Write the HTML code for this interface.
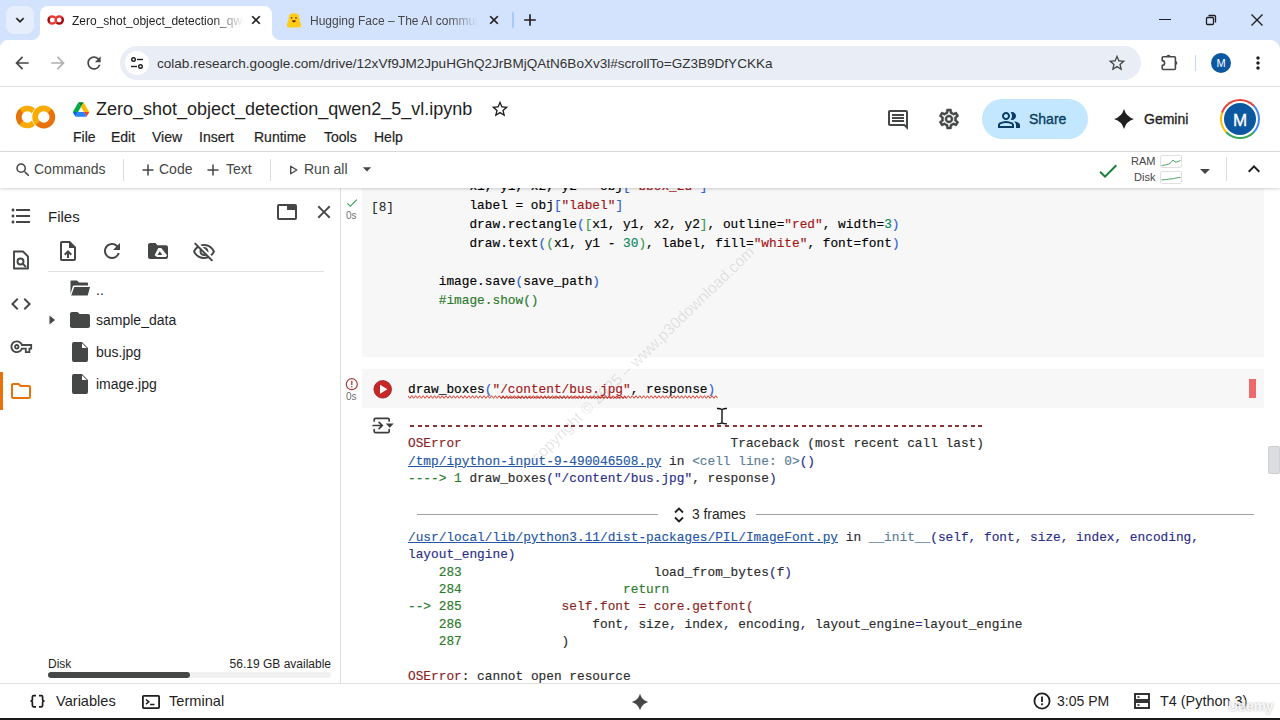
<!DOCTYPE html>
<html><head><meta charset="utf-8">
<style>
*{box-sizing:border-box;margin:0;padding:0}
html,body{width:1280px;height:720px;overflow:hidden;background:#fff;font-family:"Liberation Sans",sans-serif;color:#1f1f1f}
.a{position:absolute}
#tabstrip{left:0;top:0;width:1280px;height:40px;background:#d3e3fd}
#nav{left:0;top:40px;width:1280px;height:46px;background:#fff}
#navline{left:0;top:86px;width:1280px;height:1px;background:#e3e3e3}
#omni{left:120px;top:46px;width:1021px;height:34px;border-radius:17px;background:#e9eef6}
#header{left:0;top:87px;width:1280px;height:64px;background:#fff}
#hline{left:0;top:151px;width:1280px;height:1px;background:#e0e0e0}
#toolbar{left:0;top:152px;width:1280px;height:36px;background:#fff;box-shadow:0 1px 3px rgba(0,0,0,.18)}
#rail{left:0;top:188px;width:42px;height:495px;background:#fff}
#files{left:42px;top:188px;width:299px;height:495px;background:#fff;border-right:1px solid #e0e0e0}
#main{left:342px;top:188px;width:938px;height:495px;background:#fff}
#status{left:0;top:683px;width:1280px;height:35px;background:#fff;border-top:1px solid #e0e0e0}
#bottomline{left:0;top:718px;width:1280px;height:2px;background:#1a1a1a}
.tabt{font-size:12px;line-height:16px;white-space:nowrap;overflow:hidden}
.menu{top:41px;font-size:14px;line-height:18px;color:#1f1f1f;white-space:nowrap;-webkit-text-stroke:0.2px #1f1f1f}
.tb{top:8px;font-size:14px;line-height:18px;color:#444746;white-space:nowrap}
.fl{font-size:14px;line-height:16px;color:#1f1f1f;white-space:nowrap}
.st{top:8px;font-size:14px;line-height:18px;color:#1f1f1f;white-space:nowrap}
.mono{font-family:"Liberation Mono",monospace;font-size:12.8px;line-height:19px;white-space:pre;-webkit-text-stroke:0.15px currentColor}
.out{line-height:17.33px;color:#2b2b2b}
</style></head><body>

<div id="tabstrip" class="a">
  <div class="a" style="left:6px;top:6px;width:28px;height:28px;border-radius:8px;background:#e6eefc"></div>
  <svg class="a" style="left:12px;top:12px" width="16" height="16" viewBox="0 0 24 24"><path d="M16.59 8.59L12 13.17 7.41 8.59 6 10l6 6 6-6z" fill="#1f1f1f" stroke="#1f1f1f" stroke-width="0.6"/></svg>
  <div class="a" style="left:40px;top:6px;width:232px;height:34px;background:#fff;border-radius:8px 8px 0 0"></div>
  <div class="a" style="left:32px;top:32px;width:8px;height:8px;background:radial-gradient(circle at 0 0,#d3e3fd 7.5px,#fff 8.5px)"></div>
  <div class="a" style="left:272px;top:32px;width:8px;height:8px;background:radial-gradient(circle at 100% 0,#d3e3fd 7.5px,#fff 8.5px)"></div>
  <svg class="a" style="left:47px;top:14px" width="18" height="12" viewBox="0 0 18 12"><path d="M7.96 3.69 A3.6 3.6 0 0 0 2.65 3.45" fill="none" stroke="#e53935" stroke-width="2.5"/><path d="M2.70 3.41 A3.6 3.6 0 0 0 2.70 8.59" fill="none" stroke="#a50e0e" stroke-width="2.5"/><path d="M2.65 8.55 A3.6 3.6 0 0 0 7.96 8.31" fill="none" stroke="#e53935" stroke-width="2.5"/><path d="M14.75 3.45 A3.6 3.6 0 1 0 9.70 8.59" fill="none" stroke="#e53935" stroke-width="2.5"/><path d="M9.65 8.55 A3.6 3.6 0 1 0 14.70 3.41" fill="none" stroke="#a50e0e" stroke-width="2.5"/></svg>
  <div class="a tabt" style="left:72px;top:13px;width:172px;color:#1f1f1f;-webkit-mask-image:linear-gradient(90deg,#000 82%,transparent 100%)">Zero_shot_object_detection_qwen2_5_vl.ipynb</div>
  <svg class="a" style="left:249px;top:13px" width="14" height="14" viewBox="0 0 24 24"><path d="M19 6.41L17.59 5 12 10.59 6.41 5 5 6.41 10.59 12 5 17.59 6.41 19 12 13.41 17.59 19 19 17.59 13.41 12z" fill="#1f1f1f" stroke="#1f1f1f" stroke-width="1"/></svg>
  <svg class="a" style="left:286px;top:12px" width="16" height="16" viewBox="0 0 16 16"><path d="M3 4 Q3.5 1.2 8 1.2 Q12.5 1.2 13 4 L14 9.5 Q15.5 11 15.2 14 Q15 15.4 13.5 15.4 H2.5 Q1 15.4 0.8 14 Q0.5 11 2 9.5Z" fill="#ffcc1a"/><circle cx="5.6" cy="5.8" r="0.9" fill="#5b4a1a"/><circle cx="10" cy="5.8" r="0.9" fill="#5b4a1a"/><path d="M5.9 8.2 H9.9 Q9.6 10.6 7.9 10.6 Q6.2 10.6 5.9 8.2Z" fill="#7a2a10"/></svg>
  <div class="a tabt" style="left:310px;top:13px;width:168px;color:#474747;-webkit-mask-image:linear-gradient(90deg,#000 82%,transparent 100%)">Hugging Face – The AI community building the future.</div>
  <svg class="a" style="left:487px;top:13px" width="14" height="14" viewBox="0 0 24 24"><path d="M19 6.41L17.59 5 12 10.59 6.41 5 5 6.41 10.59 12 5 17.59 6.41 19 12 13.41 17.59 19 19 17.59 13.41 12z" fill="#1f1f1f" stroke="#1f1f1f" stroke-width="1"/></svg>
  <div class="a" style="left:512px;top:12px;width:2px;height:16px;background:#a8c7fa;border-radius:1px"></div>
  <svg class="a" style="left:520px;top:10px" width="20" height="20" viewBox="0 0 24 24"><path d="M19 13h-6v6h-2v-6H5v-2h6V5h2v6h6v2z" fill="#1f1f1f"/></svg>
  <div class="a" style="left:1159px;top:19px;width:12px;height:1.4px;background:#1f1f1f"></div>
  <svg class="a" style="left:1204px;top:13px" width="14" height="14" viewBox="0 0 14 14"><rect x="2.5" y="4.5" width="7" height="7" fill="none" stroke="#1f1f1f" stroke-width="1.3" rx="1"/><path d="M4.5 2.5 H10.5 Q11.5 2.5 11.5 3.5 V9.5" fill="none" stroke="#1f1f1f" stroke-width="1.3"/></svg>
  <svg class="a" style="left:1250px;top:13px" width="14" height="14" viewBox="0 0 14 14"><path d="M1.5 1.5 L12.5 12.5 M12.5 1.5 L1.5 12.5" stroke="#1f1f1f" stroke-width="1.4"/></svg>
</div>
<div id="nav" class="a">
  <svg class="a" style="left:12px;top:13px" width="20" height="20" viewBox="0 0 24 24"><path d="M20 11H7.83l5.59-5.59L12 4l-8 8 8 8 1.41-1.41L7.83 13H20v-2z" fill="#474747"/></svg>
  <svg class="a" style="left:48px;top:13px" width="20" height="20" viewBox="0 0 24 24"><path d="M12 4l-1.41 1.41L16.17 11H4v2h12.17l-5.58 5.59L12 20l8-8z" fill="#b0b0b0"/></svg>
  <svg class="a" style="left:84px;top:13px" width="20" height="20" viewBox="0 0 24 24"><path d="M17.65 6.35A7.958 7.958 0 0012 4c-4.42 0-7.99 3.58-7.99 8s3.57 8 7.99 8c3.73 0 6.84-2.55 7.73-6h-2.08A5.990 5.990 0 0112 18c-3.310 0-6-2.690-6-6s2.690-6 6-6c1.660 0 3.140.690 4.220 1.780L13 11h7V4l-2.350 2.350z" fill="#474747"/></svg>
</div>
<div class="a" style="left:1270px;top:40px;width:10px;height:10px;background:radial-gradient(circle at 0 100%,#fff 9.5px,#d3e3fd 10.5px)"></div>
<div class="a" style="left:0;top:40px;width:8px;height:8px;background:radial-gradient(circle at 100% 100%,#fff 7.5px,#d3e3fd 8.5px)"></div>
<div id="omni" class="a">
  <div class="a" style="left:5px;top:5px;width:24px;height:24px;border-radius:12px;background:#fff"></div>
  <svg class="a" style="left:9px;top:9px" width="16" height="16" viewBox="0 0 16 16"><circle cx="4.5" cy="4.5" r="1.8" fill="none" stroke="#1f1f1f" stroke-width="1.4"/><path d="M8 4.5H14" stroke="#1f1f1f" stroke-width="1.4"/><circle cx="11.5" cy="11.5" r="1.8" fill="none" stroke="#1f1f1f" stroke-width="1.4"/><path d="M2 11.5H8" stroke="#1f1f1f" stroke-width="1.4"/></svg>
  <div class="a" id="url" style="left:37px;top:10px;font-size:13.55px;color:#333;white-space:nowrap">colab.research.google.com/drive/12xVf9JM2JpuHGhQ2JrBMjQAtN6BoXv3l#scrollTo=GZ3B9DfYCKKa</div>
  <svg class="a" style="left:987px;top:7px" width="20" height="20" viewBox="0 0 24 24"><path d="M22 9.24l-7.19-.62L12 2 9.19 8.63 2 9.24l5.46 4.73L5.820 21 12 17.270 18.180 21l-1.630-7.030L22 9.240zM12 15.400l-3.760 2.270 1-4.280-3.320-2.880 4.380-.380L12 6.100l1.710 4.040 4.380.380-3.320 2.880 1 4.280L12 15.400z" fill="#474747"/></svg>
</div>
<svg class="a" style="left:1155px;top:48px" width="30" height="30" viewBox="0 0 30 30"><path d="M7.2 9.7 Q7.2 8.7 8.2 8.7 H19.4 Q20.4 8.7 20.4 9.7 V20.5 Q20.4 21.5 19.4 21.5 H8.2 Q7.2 21.5 7.2 20.5 V17.4 A2.4 2.4 0 0 0 7.2 12.6 Z" fill="none" stroke="#474747" stroke-width="1.6" stroke-linejoin="round"/><path d="M11.4 8.9 A2.1 2.1 0 0 1 15.6 8.9 Z" fill="#474747"/><path d="M20.2 12.9 A2.1 2.1 0 0 1 20.2 17.1 Z" fill="#474747"/></svg>
<div class="a" style="left:1195px;top:55px;width:1px;height:16px;background:#c7d7f5"></div>
<div class="a" style="left:1211px;top:53px;width:20px;height:20px;border-radius:50%;background:#0b57a0;color:#fff;font-size:11px;line-height:20px;text-align:center">M</div>
<svg class="a" style="left:1248px;top:53px" width="20" height="20" viewBox="0 0 24 24"><path d="M12 8c1.1 0 2-.9 2-2s-.9-2-2-2-2 .9-2 2 .9 2 2 2zm0 2c-1.1 0-2 .9-2 2s.9 2 2 2 2-.9 2-2-.9-2-2-2zm0 6c-1.1 0-2 .9-2 2s.9 2 2 2 2-.9 2-2-.9-2-2-2z" fill="#1f1f1f"/></svg>
<div id="navline" class="a"></div>

<div id="header" class="a">
  <svg class="a" style="left:14px;top:18px" width="44" height="24" viewBox="0 0 44 24"><path d="M19.76 6.54 A8.5 8.5 0 0 0 7.24 5.99" fill="none" stroke="#f9ab00" stroke-width="5.7"/><path d="M7.35 5.89 A8.5 8.5 0 0 0 7.35 18.11" fill="none" stroke="#e8710a" stroke-width="5.7"/><path d="M7.24 18.01 A8.5 8.5 0 0 0 19.76 17.46" fill="none" stroke="#f9ab00" stroke-width="5.7"/><path d="M26.84 4.01 A8.5 8.5 0 0 0 26.84 19.99" fill="none" stroke="#fff" stroke-width="6.9"/><path d="M35.76 5.99 A8.5 8.5 0 1 0 23.85 18.11" fill="none" stroke="#f9ab00" stroke-width="5.7"/><path d="M23.74 18.01 A8.5 8.5 0 1 0 35.65 5.89" fill="none" stroke="#e8710a" stroke-width="5.7"/></svg>
  <svg class="a" style="left:73px;top:15px" width="16" height="15" viewBox="0 0 87.3 78">
    <path d="m6.6 66.85 3.85 6.65c.8 1.4 1.95 2.5 3.3 3.3l13.75-23.8h-27.5c0 1.55.4 3.1 1.2 4.5z" fill="#0066da"/>
    <path d="m43.65 25-13.75-23.8c-1.35.8-2.5 1.9-3.3 3.3l-25.4 44a9.06 9.06 0 0 0 -1.2 4.5h27.5z" fill="#00ac47"/>
    <path d="m73.55 76.8c1.35-.8 2.5-1.9 3.3-3.3l1.6-2.75 7.650-13.25c.8-1.4 1.2-2.95 1.2-4.5h-27.502l5.852 11.5z" fill="#ea4335"/>
    <path d="m43.65 25 13.75-23.8c-1.35-.8-2.9-1.2-4.5-1.2h-18.5c-1.6 0-3.150.45-4.500 1.200z" fill="#00832d"/>
    <path d="m59.8 53h-32.3l-13.75 23.8c1.35.8 2.9 1.2 4.5 1.2h50.8c1.6 0 3.15-.45 4.5-1.2z" fill="#2684fc"/>
    <path d="m73.4 26.5-12.7-22c-.8-1.4-1.95-2.5-3.3-3.3l-13.75 23.8 16.15 28h27.45c0-1.55-.4-3.1-1.2-4.5z" fill="#ffba00"/>
  </svg>
  <div class="a" id="title" style="left:96px;top:11px;font-size:18px;line-height:22px;color:#1f1f1f;white-space:nowrap">Zero_shot_object_detection_qwen2_5_vl.ipynb</div>
  <svg class="a" style="left:490px;top:12px" width="20" height="20" viewBox="0 0 24 24"><path d="M22 9.24l-7.19-.62L12 2 9.19 8.63 2 9.24l5.46 4.73L5.820 21 12 17.270 18.180 21l-1.630-7.030L22 9.240zM12 15.400l-3.760 2.270 1-4.280-3.320-2.880 4.380-.380L12 6.100l1.710 4.040 4.380.380-3.320 2.880 1 4.280L12 15.400z" fill="#1f1f1f"/></svg>
  <div class="a menu" style="left:73px">File</div>
  <div class="a menu" style="left:111px">Edit</div>
  <div class="a menu" style="left:152px">View</div>
  <div class="a menu" style="left:199px">Insert</div>
  <div class="a menu" style="left:254px">Runtime</div>
  <div class="a menu" style="left:324px">Tools</div>
  <div class="a menu" style="left:374px">Help</div>
  <svg class="a" style="left:886px;top:21px" width="24" height="24" viewBox="0 0 24 24"><path d="M21.99 4c0-1.1-.89-2-1.99-2H4c-1.1 0-2 .9-2 2v12c0 1.1.9 2 2 2h14l4 4-.01-18zM20 4v13.170L18.830 16H4V4h16zM6 12h12v2H6zm0-3h12v2H6zm0-3h12v2H6z" fill="#444746"/></svg>
  <svg class="a" style="left:937px;top:20px" width="24" height="24" viewBox="0 0 24 24"><path d="M19.43 12.98c.04-.32.07-.64.07-.98 0-.34-.03-.66-.07-.98l2.11-1.65c.19-.15.24-.42.12-.64l-2-3.46a.5.5 0 00-.61-.22l-2.49 1c-.52-.4-1.08-.73-1.69-.98l-.38-2.65A.488.488 0 0014 2h-4c-.25 0-.46.18-.49.42l-.38 2.650c-.61.25-1.17.59-1.69.98l-2.49-1a.566.566 0 00-.18-.03c-.17 0-.34.09-.43.25l-2 3.46c-.13.22-.07.49.12.64l2.11 1.650c-.04.32-.07.65-.07.98 0 .33.03.66.07.98l-2.11 1.65c-.19.15-.24.42-.12.64l2 3.46a.5.5 0 00.61.22l2.49-1c.52.4 1.08.73 1.69.98l.38 2.65c.03.24.24.42.49.42h4c.25 0 .46-.18.49-.42l.38-2.65c.61-.25 1.17-.59 1.69-.98l2.49 1c.06.02.12.03.18.03.17 0 .34-.09.43-.25l2-3.46c.12-.22.07-.49-.12-.64l-2.11-1.65zm-1.98-1.71c.04.31.05.52.05.73 0 .21-.02.43-.05.73l-.14 1.13.89.7 1.08.84-.7 1.21-1.27-.51-1.04-.42-.9.68c-.43.32-.84.56-1.25.73l-1.06.43-.16 1.13-.2 1.35h-1.4l-.19-1.35-.16-1.13-1.06-.43c-.43-.18-.83-.41-1.23-.71l-.91-.7-1.06.43-1.27.51-.7-1.21 1.08-.84.89-.7-.14-1.13c-.03-.31-.05-.54-.05-.74s.02-.43.05-.73l.14-1.13-.89-.7-1.08-.84.7-1.21 1.27.51 1.04.42.9-.68c.43-.32.84-.56 1.25-.73l1.06-.43.16-1.13.2-1.35h1.39l.19 1.35.16 1.13 1.06.43c.43.18.83.41 1.23.71l.91.7 1.06-.43 1.27-.51.7 1.21-1.07.85-.89.7.14 1.13zM12 8c-2.21 0-4 1.79-4 4s1.79 4 4 4 4-1.79 4-4-1.79-4-4-4zm0 6c-1.1 0-2-.9-2-2s.9-2 2-2 2 .9 2 2-.9 2-2 2z" fill="#444746" stroke="#444746" stroke-width="0.5"/></svg>
  <div class="a" style="left:982px;top:12px;width:106px;height:40px;border-radius:20px;background:#c2e7ff"></div>
  <svg class="a" style="left:997px;top:21px" width="24" height="24" viewBox="0 0 24 24"><path d="M1 20v-2.8q0-.85.438-1.563.437-.712 1.162-1.087 1.55-.775 3.15-1.163Q7.35 13 9 13t3.25.387q1.6.388 3.15 1.163.725.375 1.162 1.087Q17 16.35 17 17.2V20Zm18 0v-3q0-1.1-.612-2.112-.613-1.013-1.738-1.738 1.275.15 2.4.512 1.125.363 2.1.888.9.5 1.375 1.112Q23 16.275 23 17v3ZM9 12q-1.65 0-2.825-1.175Q5 9.65 5 8q0-1.65 1.175-2.825Q7.35 4 9 4q1.65 0 2.825 1.175Q13 6.35 13 8q0 1.65-1.175 2.825Q10.65 12 9 12Zm10-4q0 1.65-1.175 2.825Q16.65 12 15 12q-.275 0-.7-.062-.425-.063-.7-.138.675-.8 1.037-1.775Q15 9.05 15 8q0-1.05-.363-2.025Q14.275 5 13.6 4.2q.35-.125.7-.163Q14.650 4 15 4q1.650 0 2.825 1.175Q19 6.350 19 8ZM3 18h12v-.8q0-.275-.137-.5-.138-.225-.363-.35-1.35-.675-2.725-1.013Q10.4 15 9 15q-1.4 0-2.775.337Q4.85 15.675 3.5 16.35q-.225.125-.362.35Q3 16.925 3 17.2Zm6-8q.825 0 1.413-.588Q11 8.825 11 8t-.587-1.412Q9.825 6 9 6q-.825 0-1.412.588Q7 7.175 7 8t.588 1.412Q8.175 10 9 10Z" fill="#0b3d62"/></svg>
  <div class="a" id="share" style="left:1029px;top:23px;font-size:14px;line-height:18px;-webkit-text-stroke:0.35px #0b3d62;color:#0b3d62">Share</div>
  <svg class="a" style="left:1112px;top:20px" width="24" height="24" viewBox="0 0 24 24"><path d="M12 2 Q14.2 9.8 22 12 Q14.2 14.2 12 22 Q9.8 14.2 2 12 Q9.8 9.8 12 2Z" fill="#1f1f1f"/></svg>
  <div class="a" id="gemini" style="left:1144px;top:23px;font-size:14px;line-height:18px;-webkit-text-stroke:0.35px #1f1f1f;color:#1f1f1f">Gemini</div>
  <div class="a" style="left:1220px;top:12px;width:40px;height:40px;border-radius:50%;background:conic-gradient(#ea4335 0deg 45deg,#4285f4 45deg 135deg,#34a853 135deg 225deg,#fbbc04 225deg 290deg,#ea4335 290deg 360deg)"></div>
  <div class="a" style="left:1222px;top:14px;width:36px;height:36px;border-radius:50%;background:#fff"></div>
  <div class="a" style="left:1224px;top:16px;width:32px;height:32px;border-radius:50%;background:#0b57a0;color:#fff;font-size:17px;line-height:35px;text-align:center;-webkit-text-stroke:0.3px #fff">M</div>
</div>
<div id="hline" class="a"></div>

<div id="rail" class="a">
  <svg class="a" style="left:9px;top:16px" width="24" height="24" viewBox="0 0 24 24"><path d="M4 10.5c-.83 0-1.5.67-1.5 1.5s.67 1.5 1.5 1.5 1.5-.67 1.5-1.5-.67-1.5-1.5-1.5zm0-6c-.83 0-1.5.67-1.5 1.5S3.17 7.5 4 7.5 5.5 6.83 5.5 6 4.83 4.5 4 4.5zm0 12c-.83 0-1.5.68-1.5 1.5s.68 1.5 1.5 1.5 1.5-.68 1.5-1.5-.67-1.5-1.5-1.5zM7 19h14v-2H7v2zm0-6h14v-2H7v2zm0-8v2h14V5H7z" fill="#444746"/></svg>
  <svg class="a" style="left:9px;top:60px" width="24" height="24" viewBox="0 0 24 24"><path d="M5 3.5 H14 L19 8.5 V20.5 H5 Z" fill="none" stroke="#444746" stroke-width="1.9" stroke-linejoin="round"/><circle cx="11.5" cy="13.5" r="3" fill="none" stroke="#444746" stroke-width="1.9"/><path d="M13.7 15.7 L17 19" stroke="#444746" stroke-width="1.9"/></svg>
  <svg class="a" style="left:9px;top:104px" width="24" height="24" viewBox="0 0 24 24"><path d="M9.4 16.6L4.8 12l4.6-4.6L8 6l-6 6 6 6 1.4-1.4zm5.2 0l4.6-4.6-4.6-4.6L16 6l6 6-6 6-1.4-1.4z" fill="#444746"/></svg>
  <svg class="a" style="left:9px;top:148px" width="24" height="24" viewBox="0 0 24 24"><path d="M22 19h-6v-4h-2.68c-1.14 2.42-3.6 4-6.32 4-3.86 0-7-3.14-7-7s3.14-7 7-7c2.72 0 5.17 1.58 6.32 4H24v6h-2v4zm-4-2h2v-4h2v-2H11.94l-.23-.67C11.01 8.34 9.11 7 7 7c-2.76 0-5 2.24-5 5s2.24 5 5 5c2.11 0 4.01-1.34 4.71-3.33l.23-.67H18v4zM7 15c-1.65 0-3-1.35-3-3s1.35-3 3-3 3 1.35 3 3-1.35 3-3 3zm0-4c-.55 0-1 .45-1 1s.45 1 1 1 1-.45 1-1-.45-1-1-1z" fill="#444746" transform="translate(1.5,0) scale(0.9)"/></svg>
  <div class="a" style="left:0;top:184px;width:2.5px;height:38px;background:#e8710a"></div>
  <svg class="a" style="left:9px;top:191px" width="24" height="24" viewBox="0 0 24 24"><path d="M9.17 6l2 2H20v10H4V6h5.17M10 4H4c-1.1 0-1.99.9-1.99 2L2 18c0 1.1.9 2 2 2h16c1.1 0 2-.9 2-2V8c0-1.1-.9-2-2-2h-8l-2-2z" fill="#e8710a"/></svg>
</div>
<div id="files" class="a">
  <div class="a" id="filesTitle" style="left:6px;top:20px;font-size:15px;line-height:18px;color:#1f1f1f">Files</div>
  <svg class="a" style="left:234px;top:15px" width="22" height="18" viewBox="0 0 22 18"><rect x="2" y="2" width="18" height="14" fill="none" stroke="#444746" stroke-width="2" rx="1"/><rect x="11" y="2" width="9" height="5" fill="#444746"/></svg>
  <svg class="a" style="left:271px;top:13px" width="22" height="22" viewBox="0 0 24 24"><path d="M19 6.41L17.59 5 12 10.59 6.41 5 5 6.41 10.59 12 5 17.59 6.41 19 12 13.41 17.59 19 19 17.59 13.41 12z" fill="#444746"/></svg>
  <svg class="a" style="left:14px;top:51px" width="24" height="24" viewBox="0 0 24 24"><path d="M14 2H6c-1.1 0-1.99.9-1.99 2L4 20c0 1.1.89 2 1.99 2H18c1.1 0 2-.9 2-2V8l-6-6zm4 18H6V4h7v5h5v11zM8 15.01l1.41 1.41L11 14.84V19h2v-4.16l1.59 1.59L16 15.01 12.01 11z" fill="#444746"/></svg>
  <svg class="a" style="left:58px;top:51px" width="24" height="24" viewBox="0 0 24 24"><path d="M17.65 6.35A7.958 7.958 0 0012 4c-4.42 0-7.99 3.58-7.99 8s3.57 8 7.99 8c3.73 0 6.84-2.55 7.73-6h-2.08A5.990 5.990 0 0112 18c-3.310 0-6-2.690-6-6s2.690-6 6-6c1.660 0 3.140.690 4.220 1.780L13 11h7V4l-2.350 2.350z" fill="#444746"/></svg>
  <svg class="a" style="left:106px;top:55px" width="20" height="16" viewBox="0 0 20 16"><path d="M0 2 Q0 0 2 0 H7.5 L9.5 2.3 H18 Q20 2.3 20 4.3 V14 Q20 16 18 16 H2 Q0 16 0 14 Z" fill="#444746"/><path d="M10.3 5 H13.2 L19 12.2 L17.8 14 H9 L6.6 12.2 Z" fill="#fff"/><path d="M11.8 8.2 L14.4 12 H9.5 Z" fill="#444746"/></svg>
  <svg class="a" style="left:150px;top:52px" width="24" height="24" viewBox="0 0 24 24"><path d="M12 6c3.79 0 7.17 2.13 8.82 5.5-.59 1.22-1.42 2.27-2.41 3.12l1.41 1.41c1.39-1.23 2.49-2.77 3.18-4.53C21.27 7.11 17 4 12 4c-1.27 0-2.49.2-3.64.57l1.65 1.65C10.66 6.09 11.32 6 12 6zm-1.07 1.14L13 9.21c.57.25 1.03.71 1.28 1.28l2.07 2.07c.08-.34.14-.7.14-1.07C16.5 9.01 14.48 7 12 7c-.37 0-.72.05-1.07.14zM2.01 3.87l2.68 2.68C3.06 7.830 1.770 9.530 1 11.500 2.730 15.890 7 19 12 19c1.520 0 2.980-.290 4.320-.820l3.420 3.420 1.410-1.410L3.420 2.450 2.010 3.870zm7.5 7.5l2.61 2.61c-.04.01-.08.02-.12.02-1.38 0-2.5-1.12-2.5-2.5 0-.05.01-.08.01-.13zm-3.4-3.4l1.750 1.750c-.230.550-.360 1.150-.360 1.780 0 2.480 2.020 4.500 4.500 4.500.630 0 1.230-.130 1.770-.360l.980.980c-.880.240-1.800.380-2.750.380-3.790 0-7.170-2.130-8.820-5.500.700-1.430 1.720-2.610 2.930-3.530z" fill="#444746"/></svg>
  <div class="a" style="left:6px;top:83px;width:276px;height:1px;background:#e0e0e0"></div>
  <svg class="a" style="left:27px;top:91px" width="22" height="18" viewBox="0 0 22 18"><path d="M1.5 2.5 Q1.5 1.5 2.5 1.5 H8 L10 3.5 H18 Q19 3.5 19 4.5 V6.5 H5 Q4 6.5 3.7 7.5 L1.5 15 Z" fill="#444746"/><path d="M5.3 8 H21 L18.7 16.5 H2.2 Z" fill="#444746"/></svg>
  <div class="a fl" style="left:54px;top:94px">..</div>
  <svg class="a" style="left:5px;top:126px" width="12" height="12" viewBox="0 0 12 12"><path d="M2.5 1.5 L8 6 L2.5 10.5Z" fill="#444746"/></svg>
  <svg class="a" style="left:28px;top:124px" width="20" height="16" viewBox="0 0 20 16"><path d="M0 2 Q0 0 2 0 H7.5 L9.5 2 H18 Q20 2 20 4 V14 Q20 16 18 16 H2 Q0 16 0 14 Z" fill="#444746"/></svg>
  <div class="a fl" style="left:54px;top:124px">sample_data</div>
  <svg class="a" style="left:30px;top:154px" width="16" height="20" viewBox="0 0 16 20"><path d="M2 0 H10 L16 6 V18 Q16 20 14 20 H2 Q0 20 0 18 V2 Q0 0 2 0Z" fill="#444746"/><path d="M10 1.2 V6 H14.8Z" fill="#fff"/></svg>
  <div class="a fl" style="left:54px;top:156px">bus.jpg</div>
  <svg class="a" style="left:30px;top:186px" width="16" height="20" viewBox="0 0 16 20"><path d="M2 0 H10 L16 6 V18 Q16 20 14 20 H2 Q0 20 0 18 V2 Q0 0 2 0Z" fill="#444746"/><path d="M10 1.2 V6 H14.8Z" fill="#fff"/></svg>
  <div class="a fl" style="left:54px;top:188px">image.jpg</div>
  <div class="a" style="left:6px;top:469px;font-size:12px;line-height:14px;color:#1f1f1f">Disk</div>
  <div class="a" id="avail" style="left:139px;top:469px;width:150px;white-space:nowrap;text-align:right;font-size:12px;line-height:14px;color:#1f1f1f">56.19 GB available</div>
  <div class="a" style="left:6px;top:484px;width:283px;height:6px;border-radius:3px;background:#f1f1f1"></div>
  <div class="a" style="left:6px;top:484px;width:142px;height:6px;border-radius:3px;background:#444746"></div>
</div>

<div id="main" class="a">
  <div class="a" style="left:20px;top:-12px;width:902px;height:181px;background:#f7f7f7"></div>
  <div class="a mono" id="code1" style="left:66px;top:-11px;color:#000">        x1, y1, x2, y2 = obj<span style="color:#3060d0">[</span><span style="color:#a31515">"bbox_2d"</span><span style="color:#3060d0">]</span>
        label = obj<span style="color:#3060d0">[</span><span style="color:#a31515">"label"</span><span style="color:#3060d0">]</span>
        draw.rectangle<span style="color:#3060d0">(</span><span style="color:#3d9a4a">[</span>x1, y1, x2, y2<span style="color:#3d9a4a">]</span>, outline=<span style="color:#a31515">"red"</span>, width=<span style="color:#098658">3</span><span style="color:#3060d0">)</span>
        draw.text<span style="color:#3060d0">(</span><span style="color:#3d9a4a">(</span>x1, y1 - <span style="color:#098658">30</span><span style="color:#3d9a4a">)</span>, label, fill=<span style="color:#a31515">"white"</span>, font=font<span style="color:#3060d0">)</span>

    image.save<span style="color:#3060d0">(</span>save_path<span style="color:#3060d0">)</span>
    <span style="color:#2a7a2a">#image.show()</span></div>
  <svg class="a" style="left:3px;top:8px" width="14" height="14" viewBox="0 0 24 24"><path d="M9 16.17L4.83 12l-1.42 1.41L9 19 21 7l-1.41-1.41z" fill="#34a05a"/></svg>
  <div class="a" style="left:4px;top:22px;font-size:10px;line-height:12px;color:#707070">0s</div>
  <div class="a mono" id="cnum" style="left:29px;top:10px;color:#2b2b2b;-webkit-text-stroke:0.1px #2b2b2b">[8]</div>
  <div class="a" style="left:20px;top:181px;width:902px;height:39px;background:#f7f7f7"></div>
  <svg class="a" style="left:3px;top:189px" width="14" height="14" viewBox="0 0 14 14"><circle cx="6.8" cy="7.2" r="5.5" fill="none" stroke="#a83a3a" stroke-width="1.2"/><rect x="6.15" y="3.8" width="1.3" height="4.2" fill="#a83a3a"/><rect x="6.15" y="9" width="1.3" height="1.4" fill="#a83a3a"/></svg>
  <div class="a" style="left:4px;top:203px;font-size:10px;line-height:12px;color:#707070">0s</div>
  <svg class="a" style="left:30px;top:191px" width="21" height="21" viewBox="0 0 21 21"><circle cx="10.7" cy="10.3" r="8.8" fill="#c62828" stroke="#9e1f1f" stroke-width="0.8"/><path d="M8 5.8 L15.4 10.3 L8 14.8Z" fill="#fff"/></svg>
  <div class="a mono" id="code2" style="left:66px;top:192px;color:#000">draw_boxes<span style="color:#3060d0">(</span><span style="color:#a31515">"/content/bus.jpg"</span>, response<span style="color:#3060d0">)</span></div>
  <svg class="a" style="left:66px;top:206px" width="310" height="6" viewBox="0 0 310 6"><path d="M0.0 1.7 L1.9 4.3 L3.8 1.7 L5.7 4.3 L7.6 1.7 L9.5 4.3 L11.4 1.7 L13.3 4.3 L15.2 1.7 L17.1 4.3 L19.0 1.7 L20.9 4.3 L22.8 1.7 L24.7 4.3 L26.6 1.7 L28.5 4.3 L30.4 1.7 L32.3 4.3 L34.2 1.7 L36.1 4.3 L38.0 1.7 L39.9 4.3 L41.8 1.7 L43.7 4.3 L45.6 1.7 L47.5 4.3 L49.4 1.7 L51.3 4.3 L53.2 1.7 L55.1 4.3 L57.0 1.7 L58.9 4.3 L60.8 1.7 L62.7 4.3 L64.6 1.7 L66.5 4.3 L68.4 1.7 L70.3 4.3 L72.2 1.7 L74.1 4.3 L76.0 1.7 L77.9 4.3 L79.8 1.7 L81.7 4.3 L83.6 1.7 L85.5 4.3 L87.4 1.7 L89.3 4.3 L91.2 1.7 L93.1 4.3 L95.0 1.7 L96.9 4.3 L98.8 1.7 L100.7 4.3 L102.6 1.7 L104.5 4.3 L106.4 1.7 L108.3 4.3 L110.2 1.7 L112.1 4.3 L114.0 1.7 L115.9 4.3 L117.8 1.7 L119.7 4.3 L121.6 1.7 L123.5 4.3 L125.4 1.7 L127.3 4.3 L129.2 1.7 L131.1 4.3 L133.0 1.7 L134.9 4.3 L136.8 1.7 L138.7 4.3 L140.6 1.7 L142.5 4.3 L144.4 1.7 L146.3 4.3 L148.2 1.7 L150.1 4.3 L152.0 1.7 L153.9 4.3 L155.8 1.7 L157.7 4.3 L159.6 1.7 L161.5 4.3 L163.4 1.7 L165.3 4.3 L167.2 1.7 L169.1 4.3 L171.0 1.7 L172.9 4.3 L174.8 1.7 L176.7 4.3 L178.6 1.7 L180.5 4.3 L182.4 1.7 L184.3 4.3 L186.2 1.7 L188.1 4.3 L190.0 1.7 L191.9 4.3 L193.8 1.7 L195.7 4.3 L197.6 1.7 L199.5 4.3 L201.4 1.7 L203.3 4.3 L205.2 1.7 L207.1 4.3 L209.0 1.7 L210.9 4.3 L212.8 1.7 L214.7 4.3 L216.6 1.7 L218.5 4.3 L220.4 1.7 L222.3 4.3 L224.2 1.7 L226.1 4.3 L228.0 1.7 L229.9 4.3 L231.8 1.7 L233.7 4.3 L235.6 1.7 L237.5 4.3 L239.4 1.7 L241.3 4.3 L243.2 1.7 L245.1 4.3 L247.0 1.7 L248.9 4.3 L250.8 1.7 L252.7 4.3 L254.6 1.7 L256.5 4.3 L258.4 1.7 L260.3 4.3 L262.2 1.7 L264.1 4.3 L266.0 1.7 L267.9 4.3 L269.8 1.7 L271.7 4.3 L273.6 1.7 L275.5 4.3 L277.4 1.7 L279.3 4.3 L281.2 1.7 L283.1 4.3 L285.0 1.7 L286.9 4.3 L288.8 1.7 L290.7 4.3 L292.6 1.7 L294.5 4.3 L296.4 1.7 L298.3 4.3 L300.2 1.7 L302.1 4.3 L304.0 1.7 L305.9 4.3 L307.8 1.7 L309.7 4.3" fill="none" stroke="#e0281a" stroke-width="0.9"/><path d="M92.0 2.7 L93.6 4.5 L95.2 2.7 L96.8 4.5 L98.4 2.7 L100.0 4.5 L101.6 2.7 L103.2 4.5 L104.8 2.7 L106.4 4.5 L108.0 2.7 L109.6 4.5 L111.2 2.7 L112.8 4.5 L114.4 2.7 L116.0 4.5 L117.6 2.7 L119.2 4.5 L120.8 2.7 L122.4 4.5 L124.0 2.7 L125.6 4.5 L127.2 2.7 L128.8 4.5 L130.4 2.7 L132.0 4.5 L133.6 2.7 L135.2 4.5 L136.8 2.7 L138.4 4.5 L140.0 2.7 L141.6 4.5 L143.2 2.7 L144.8 4.5 L146.4 2.7 L148.0 4.5 L149.6 2.7 L151.2 4.5 L152.8 2.7 L154.4 4.5 L156.0 2.7 L157.6 4.5 L159.2 2.7 L160.8 4.5 L162.4 2.7 L164.0 4.5 L165.6 2.7 L167.2 4.5 L168.8 2.7 L170.4 4.5 L172.0 2.7 L173.6 4.5 L175.2 2.7 L176.8 4.5 L178.4 2.7 L180.0 4.5 L181.6 2.7 L183.2 4.5 L184.8 2.7 L186.4 4.5 L188.0 2.7 L189.6 4.5 L191.2 2.7 L192.8 4.5 L194.4 2.7 L196.0 4.5 L197.6 2.7 L199.2 4.5 L200.8 2.7 L202.4 4.5 L204.0 2.7 L205.6 4.5 L207.2 2.7 L208.8 4.5 L210.4 2.7 L212.0 4.5 L213.6 2.7 L215.2 4.5 L216.8 2.7 L218.4 4.5" fill="none" stroke="#a8201a" stroke-width="0.9"/></svg>
  <div class="a" style="left:907px;top:191px;width:7px;height:19px;background:#ee6a6a"></div>

  <svg class="a" style="left:30px;top:227px" width="24" height="20" viewBox="0 0 24 20"><path d="M2.2 6 V4.8 Q2.2 3.3 3.7 3.3 H15.7 Q17.2 3.3 17.2 4.8 V6 M2.2 14.6 V16.2 Q2.2 17.7 3.7 17.7 H15.7 Q17.2 17.7 17.2 16.2 V14.6" fill="none" stroke="#3c3c3c" stroke-width="1.7" stroke-linecap="round"/><path d="M1.2 10.5 H10.3 M7.1 7.3 L10.3 10.5 L7.1 13.7" fill="none" stroke="#3c3c3c" stroke-width="1.7" stroke-linecap="round"/><path d="M13.8 8.6 H21.8 L17.8 12.8Z" fill="#3c3c3c"/></svg>
  <div class="a" style="left:66px;top:237px;width:576px;height:2px;background:repeating-linear-gradient(90deg,transparent 0 2px,#8a3535 2px 6px,transparent 6px 7.68px)"></div>
  <div class="a mono out" id="out1" style="left:66px;top:230px"><span style="color:transparent;-webkit-text-stroke:0">---------------------------------------------------------------------------</span>
<span style="color:#8a1f1f">OSError</span>                                   Traceback (most recent call last)
<span style="color:#2456a6;text-decoration:underline">/tmp/ipython-input-9-490046508.py</span> in <span style="color:#5a7c96">&lt;cell line: 0&gt;</span><span style="color:#2a2d87">()</span>
<span style="color:#2a7a2a">----&gt; 1</span> draw_boxes<span style="color:#2a2d87">("/content/bus.jpg"</span>, response<span style="color:#2a2d87">)</span></div>
  <div class="a" style="left:75px;top:326px;width:241px;height:1px;background:#a0a0a0"></div>
  <svg class="a" style="left:331px;top:318px" width="12" height="18" viewBox="0 0 12 18"><path d="M2 6.5 L6 2.5 L10 6.5 M2 11.5 L6 15.5 L10 11.5" fill="none" stroke="#1f1f1f" stroke-width="1.8"/></svg>
  <div class="a" id="frames" style="left:350px;top:318px;font-size:13.8px;line-height:17px;color:#1f1f1f">3 frames</div>
  <div class="a" style="left:414px;top:326px;width:498px;height:1px;background:#a0a0a0"></div>
  <div class="a mono out" id="out2" style="left:66px;top:341px"><span style="color:#2456a6;text-decoration:underline">/usr/local/lib/python3.11/dist-packages/PIL/ImageFont.py</span> in <span style="color:#5a7c96">__init__</span><span style="color:#2a2d87">(self, font, size, index, encoding,</span>
<span style="color:#2a2d87">layout_engine)</span>
<span style="color:#2a7a2a">    283</span>                         load_from_bytes<span style="color:#2a2d87">(</span>f<span style="color:#2a2d87">)</span>
<span style="color:#2a7a2a">    284</span>                     <span style="color:#2a7a2a">return</span>
<span style="color:#2a7a2a">--&gt; 285</span>             <span style="color:#8a1f1f">self.font = core.getfont(</span>
<span style="color:#2a7a2a">    286</span>                 font<span style="color:#2a2d87">,</span> size<span style="color:#2a2d87">,</span> index<span style="color:#2a2d87">,</span> encoding<span style="color:#2a2d87">,</span> layout_engine<span style="color:#2a2d87">=</span>layout_engine
<span style="color:#2a7a2a">    287</span>             )

<span style="color:#8a1f1f">OSError</span>: cannot open resource</div>
</div>

<div class="a" style="left:1268px;top:446px;width:12px;height:28px;border-radius:2px;background:#dadce0;border:1px solid #cfd1d4"></div>
<div id="toolbar" class="a">
  <svg class="a" style="left:14px;top:9px" width="18" height="18" viewBox="0 0 24 24"><path d="M15.5 14h-.79l-.28-.27A6.471 6.471 0 0016 9.5 6.5 6.5 0 109.5 16c1.61 0 3.09-.59 4.23-1.57l.27.28v.79l5 4.99L20.49 19l-4.99-5zm-6 0C7.01 14 5 11.99 5 9.5S7.01 5 9.5 5 14 7.01 14 9.5 11.99 14 9.5 14z" fill="#444746"/></svg>
  <div class="a tb" style="left:34px">Commands</div>
  <div class="a" style="left:123px;top:7px;width:1px;height:22px;background:#dadce0"></div>
  <svg class="a" style="left:140px;top:10px" width="16" height="16" viewBox="0 0 16 16"><path d="M8 2.5 V13.5 M2.5 8 H13.5" stroke="#444746" stroke-width="1.5"/></svg>
  <div class="a tb" style="left:159px">Code</div>
  <svg class="a" style="left:205px;top:10px" width="16" height="16" viewBox="0 0 16 16"><path d="M8 2.5 V13.5 M2.5 8 H13.5" stroke="#444746" stroke-width="1.5"/></svg>
  <div class="a tb" style="left:226px">Text</div>
  <div class="a" style="left:270px;top:7px;width:1px;height:22px;background:#dadce0"></div>
  <svg class="a" style="left:287px;top:11px" width="14" height="14" viewBox="0 0 14 14"><path d="M3.7 3.2 L9.8 7 L3.7 10.8 Z" fill="none" stroke="#444746" stroke-width="1.3" stroke-linejoin="round"/></svg>
  <div class="a tb" style="left:304px">Run all</div>
  <svg class="a" style="left:357px;top:7px" width="20" height="20" viewBox="0 0 24 24"><path d="M7 10l5 5 5-5z" fill="#444746"/></svg>
  <svg class="a" style="left:1096px;top:7px" width="24" height="24" viewBox="0 0 24 24"><path d="M9 16.17L4.83 12l-1.42 1.41L9 19 21 7l-1.41-1.41z" fill="#188038"/></svg>
  <div class="a" style="left:1131px;top:3px;font-size:11px;line-height:12px;color:#444746">RAM</div>
  <div class="a" style="left:1134px;top:19px;font-size:11px;line-height:12px;color:#444746">Disk</div>
  <svg class="a" style="left:1160px;top:3px" width="22" height="13" viewBox="0 0 22 13"><rect x="0.5" y="0.5" width="21" height="12" rx="1.5" fill="#fff" stroke="#e0e0e0"/><path d="M1.5 10.5 Q6 10 9 9 Q11 8 13 5 Q15 8 17 7 Q19 6 20.5 5.5" fill="none" stroke="#52a66b" stroke-width="1"/></svg>
  <svg class="a" style="left:1160px;top:19px" width="22" height="13" viewBox="0 0 22 13"><rect x="0.5" y="0.5" width="21" height="12" rx="1.5" fill="#fff" stroke="#e0e0e0"/><path d="M1.5 9 Q6 8.5 10 8 Q14 7.8 16 7 Q18 6.5 20.5 6.5" fill="none" stroke="#52a66b" stroke-width="1"/></svg>
  <svg class="a" style="left:1193px;top:7px" width="24" height="24" viewBox="0 0 24 24"><path d="M7 10l5 5 5-5z" fill="#444746"/></svg>
  <div class="a" style="left:1226px;top:5px;width:1px;height:24px;background:#dadce0"></div>
  <svg class="a" style="left:1242px;top:5px" width="24" height="24" viewBox="0 0 24 24"><path d="M12 8l-6 6 1.41 1.41L12 10.83l4.59 4.58L18 14z" fill="#1f1f1f"/></svg>
</div>

<div id="status" class="a">
  <svg class="a" style="left:28px;top:7px" width="20" height="20" viewBox="0 0 20 20"><path d="M8 4.6 H5.6 Q4.4 4.6 4.4 5.8 V8.6 Q4.4 10 2.4 10 Q4.4 10 4.4 11.4 V14.6 Q4.4 15.9 5.6 15.9 H8 M11 4.6 H13.4 Q14.6 4.6 14.6 5.8 V8.6 Q14.6 10 16.6 10 Q14.6 10 14.6 11.4 V14.6 Q14.6 15.9 13.4 15.9 H11" fill="none" stroke="#1f1f1f" stroke-width="1.7"/></svg>
  <div class="a st" style="left:56px;font-size:14.6px">Variables</div>
  <svg class="a" style="left:141px;top:8px" width="20" height="20" viewBox="0 0 20 20"><rect x="1.9" y="3.9" width="16.2" height="12.2" rx="0.8" fill="none" stroke="#1f1f1f" stroke-width="1.8"/><path d="M5 7.5 L7.8 9.8 L5 12.1 M9 12.6 H13.5" fill="none" stroke="#1f1f1f" stroke-width="1.5"/></svg>
  <div class="a st" style="left:169px;font-size:14.6px">Terminal</div>
  <svg class="a" style="left:631px;top:9px" width="18" height="18" viewBox="0 0 24 24"><path d="M12 1 Q14.4 9.6 23 12 Q14.4 14.4 12 23 Q9.6 14.4 1 12 Q9.6 9.6 12 1Z" fill="#444746"/></svg>
  <svg class="a" style="left:1032px;top:7px" width="20" height="20" viewBox="0 0 20 20"><circle cx="10" cy="10" r="7.6" fill="none" stroke="#1f1f1f" stroke-width="1.8"/><rect x="9.1" y="5.5" width="1.8" height="5.5" fill="#1f1f1f"/><rect x="9.1" y="12.3" width="1.8" height="1.9" fill="#1f1f1f"/></svg>
  <div class="a st" id="time" style="left:1057px">3:05 PM</div>
  <svg class="a" style="left:1132px;top:7px" width="20" height="20" viewBox="0 0 20 20"><rect x="3" y="3" width="14" height="6" fill="none" stroke="#1f1f1f" stroke-width="1.8"/><rect x="3" y="11" width="14" height="6" fill="none" stroke="#1f1f1f" stroke-width="1.8"/><rect x="5.5" y="5.3" width="2" height="1.5" fill="#1f1f1f"/><rect x="5.5" y="13.3" width="2" height="1.5" fill="#1f1f1f"/></svg>
  <div class="a st" id="rt" style="left:1160px;font-size:14.4px">T4 (Python 3)</div>
</div>
<div id="bottomline" class="a"></div>
<div class="a" id="wm" style="left:534px;top:452px;font-size:15.8px;line-height:16px;white-space:nowrap;color:rgba(90,90,90,0.16);transform:rotate(-44deg);transform-origin:0 50%">copyright © 2025 – www.p30download.com</div>
<svg class="a" style="left:714px;top:405px" width="16" height="22" viewBox="0 0 16 22"><path d="M3 3.5 Q5.5 3.2 8 4.5 Q10.5 3.2 13 3.5 M8 4.5 V18.5 M3 18.8 Q5.5 19 8 17.8 Q10.5 19 13 18.8" fill="none" stroke="#111" stroke-width="1.4"/></svg>
<div class="a" style="left:1228px;top:697px;font-size:14px;line-height:18px;font-weight:bold;color:rgba(255,255,255,0.9);text-shadow:0 0 2px rgba(0,0,0,0.35);letter-spacing:-0.3px">Udemy</div>
</body></html>
